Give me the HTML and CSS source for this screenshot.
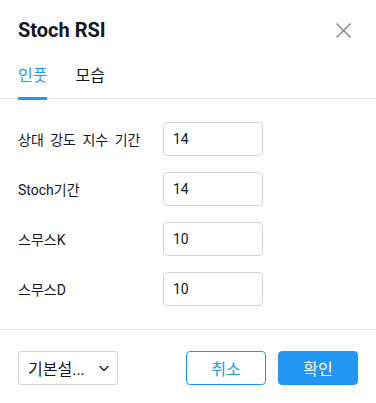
FILE: index.html
```html
<!DOCTYPE html>
<html lang="ko">
<head>
<meta charset="utf-8">
<link rel="stylesheet" href="styles.css">
</head>
<body>
<div class="dialog">
  <header class="header">
    <h2 class="title">Stoch RSI</h2>
    <button class="close" aria-label="닫기">
      <svg width="15" height="15" viewBox="0 0 15 15"><path d="M0.5 0.5L14.5 14.5M14.5 0.5L0.5 14.5" stroke="#787b86" stroke-width="1.2" fill="none"/></svg>
    </button>
  </header>
  <nav class="tabs">
    <div class="tab active">인풋</div>
    <div class="tab">모습</div>
  </nav>
  <div class="body">
    <div class="row"><span class="label">상대 강도 지수 기간</span><input class="field" value="14"></div>
    <div class="row"><span class="label">Stoch기간</span><input class="field" value="14"></div>
    <div class="row"><span class="label">스무스K</span><input class="field" value="10"></div>
    <div class="row"><span class="label">스무스D</span><input class="field" value="10"></div>
  </div>
  <footer class="footer">
    <div class="select">
      <span class="select-text">기본설...</span>
      <svg width="12" height="12" viewBox="0 0 12 12"><path d="M1.5 4L6 8.5L10.5 4" stroke="#131722" stroke-width="1.3" fill="none"/></svg>
    </div>
    <div class="actions">
      <button class="btn btn-cancel">취소</button>
      <button class="btn btn-ok">확인</button>
    </div>
  </footer>
</div>
</body>
</html>
```

FILE: styles.css
```css
* { box-sizing: border-box; }
body {
  margin: 0;
  background: #fff;
  color: #131722;
  font-family: Roboto, "Noto Sans CJK KR", sans-serif;
}
.dialog { width: 376px; }
.header {
  display: flex;
  align-items: center;
  justify-content: space-between;
  padding: 18px 25px 0 18px;
}
.title {
  margin: 0;
  font-size: 20px;
  line-height: 24px;
  font-weight: 700;
}
.close {
  border: 0;
  background: none;
  padding: 0;
  width: 15px;
  height: 15px;
  display: flex;
}
.tabs {
  display: flex;
  gap: 28px;
  margin-top: 22px;
  padding: 0 18px;
  border-bottom: 1px solid #e0e3eb;
}
.tab {
  position: relative;
  font-size: 16px;
  line-height: 24px;
  padding-bottom: 10px;
}
.tab.active { color: #2196f3; }
.tab.active::after {
  content: "";
  position: absolute;
  left: 0;
  right: 0;
  bottom: -2px;
  height: 3px;
  background: #2196f3;
}
.body {
  display: flex;
  flex-direction: column;
  gap: 16px;
  padding: 23px 18px;
  border-bottom: 1px solid #e0e3eb;
}
.row {
  display: flex;
  align-items: center;
  height: 34px;
}
.label {
  width: 145px;
  font-size: 14px;
  word-spacing: 3px;
}
.field {
  width: 100px;
  height: 34px;
  border: 1px solid #d1d4dc;
  border-radius: 4px;
  padding: 0 9px;
  font-family: inherit;
  font-size: 14px;
  color: #131722;
  outline: none;
}
.footer {
  display: flex;
  align-items: center;
  justify-content: space-between;
  padding: 21px 18px 18px;
}
.select {
  width: 100px;
  height: 34px;
  border: 1px solid #d1d4dc;
  border-radius: 4px;
  padding: 0 7px 0 9px;
  display: flex;
  align-items: center;
  justify-content: space-between;
  font-size: 16px;
}
.select-text {
  white-space: nowrap;
}
.actions {
  display: flex;
  gap: 12px;
}
.btn {
  width: 80px;
  height: 34px;
  border-radius: 4px;
  font-family: inherit;
  font-size: 16px;
  padding: 0;
}
.btn-cancel {
  background: #fff;
  border: 1px solid #2196f3;
  color: #2196f3;
}
.btn-ok {
  background: #2196f3;
  border: 1px solid #2196f3;
  color: #fff;
}
```
